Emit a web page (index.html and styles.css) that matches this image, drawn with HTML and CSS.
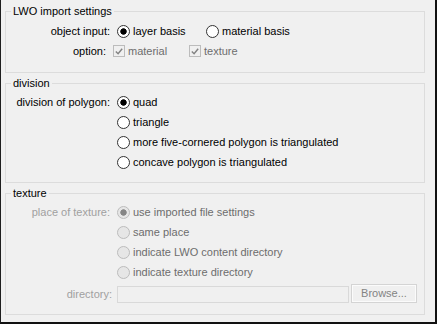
FILE: index.html
```html
<!DOCTYPE html>
<html lang="en">
<head>
  <meta charset="UTF-8" />
  <title>LWO import settings</title>
  <link rel="stylesheet" href="styles.css">
</head>
<body>

  <div class="panel">
    <fieldset class="group group-first">
      <legend>LWO import settings</legend>

      <div class="row">
        <span class="label">object input:</span>
        <span class="choice choice-wide"><span class="radio checked"></span>layer basis</span>
        <span class="choice"><span class="radio"></span>material basis</span>
      </div>

      <div class="row row-option">
        <span class="label label-short">option:</span>
        <span class="choice choice-check disabled">
          <span class="check"><svg width="11" height="11" viewBox="0 0 11 11"><polyline points="2,5.5 4.5,8 9,2.5" fill="none" stroke="#838383" stroke-width="1.6"/></svg></span>material
        </span>
        <span class="choice disabled">
          <span class="check"><svg width="11" height="11" viewBox="0 0 11 11"><polyline points="2,5.5 4.5,8 9,2.5" fill="none" stroke="#838383" stroke-width="1.6"/></svg></span>texture
        </span>
      </div>
    </fieldset>

    <fieldset class="group">
      <legend>division</legend>

      <div class="row">
        <span class="label">division of polygon:</span>
        <span class="choice"><span class="radio checked"></span>quad</span>
      </div>
      <div class="row">
        <span class="label"></span>
        <span class="choice"><span class="radio"></span>triangle</span>
      </div>
      <div class="row">
        <span class="label"></span>
        <span class="choice"><span class="radio"></span>more five-cornered polygon is triangulated</span>
      </div>
      <div class="row">
        <span class="label"></span>
        <span class="choice"><span class="radio"></span>concave polygon is triangulated</span>
      </div>
    </fieldset>

    <fieldset class="group">
      <legend>texture</legend>

      <div class="row">
        <span class="label label-off">place of texture:</span>
        <span class="choice disabled"><span class="radio checked"></span>use imported file settings</span>
      </div>
      <div class="row">
        <span class="label"></span>
        <span class="choice disabled"><span class="radio"></span>same place</span>
      </div>
      <div class="row">
        <span class="label"></span>
        <span class="choice disabled"><span class="radio"></span>indicate LWO content directory</span>
      </div>
      <div class="row">
        <span class="label"></span>
        <span class="choice disabled"><span class="radio"></span>indicate texture directory</span>
      </div>

      <div class="row row-dir">
        <span class="label label-dir label-off">directory:</span>
        <span class="dir-input"></span>
        <span class="btn">Browse...</span>
      </div>
    </fieldset>
  </div>

</body>
</html>
```

FILE: styles.css
```css
* {
  margin: 0;
  padding: 0;
  box-sizing: border-box;
}

html, body {
  height: 100%;
}

body {
  font-family: 'Liberation Sans', Arial, sans-serif;
  font-size: 11px;
  color: #000;
  background: #f0f0f0;
  border-left: 1px solid #1e1e1e;
  border-right: 2px solid #111;
  border-bottom: 2px solid #111;
  overflow: hidden;
}

.panel {
  padding: 0 10px 0 4px;
}

.group {
  border: 1px solid #dcdcdc;
  margin: 3px 0 0 0;
  padding: 2px 0 10px 5px;
  min-width: 0;
}

.group-first {
  margin-top: 4px;
  padding-top: 3px;
  padding-bottom: 11px;
}

legend {
  padding: 0 2px;
  line-height: 14px;
}

.row {
  display: flex;
  align-items: center;
  height: 20px;
  white-space: nowrap;
}

.label {
  width: 99px;
  margin-right: 7px;
  text-align: right;
  flex: none;
}

.label-short {
  width: 95px;
}

.label-off {
  color: #a0a0a0;
}

.choice {
  display: flex;
  align-items: center;
}

.choice-wide {
  width: 89px;
}

.choice-check {
  width: 76px;
}

.disabled {
  color: #6d6d6d;
}

/* radio buttons */
.radio {
  width: 13px;
  height: 13px;
  border: 1px solid #333;
  border-radius: 50%;
  background: #fff;
  margin-right: 3px;
  flex: none;
}

.radio.checked {
  background: radial-gradient(circle, #000 2.8px, #fff 3.6px);
}

.disabled .radio {
  border-color: #bcbcbc;
  background: #e6e6e6;
}

.disabled .radio.checked {
  background: radial-gradient(circle, #858585 2.8px, #e6e6e6 3.6px);
}

/* check boxes */
.check {
  width: 12px;
  height: 12px;
  border: 1px solid #bcbcbc;
  background: #f0f0f0;
  margin-right: 3px;
  display: flex;
  align-items: center;
  justify-content: center;
  flex: none;
}

.check svg {
  display: block;
}

/* directory row */
.row-dir {
  margin-top: 2px;
  align-items: flex-start;
}

.label-dir {
  line-height: 20px;
  width: 101px;
  margin-right: 5px;
}

.dir-input {
  width: 232px;
  height: 17px;
  margin-top: 2px;
  border: 1px solid #d9d9d9;
  background: #f0f0f0;
}

.btn {
  width: 66px;
  height: 19px;
  margin-left: 2px;
  border: 1px solid #d4d4d4;
  box-shadow: inset 0 0 0 1px #fbfbfb;
  background: #f0f0f0;
  color: #838383;
  text-align: center;
  line-height: 17px;
}
```
